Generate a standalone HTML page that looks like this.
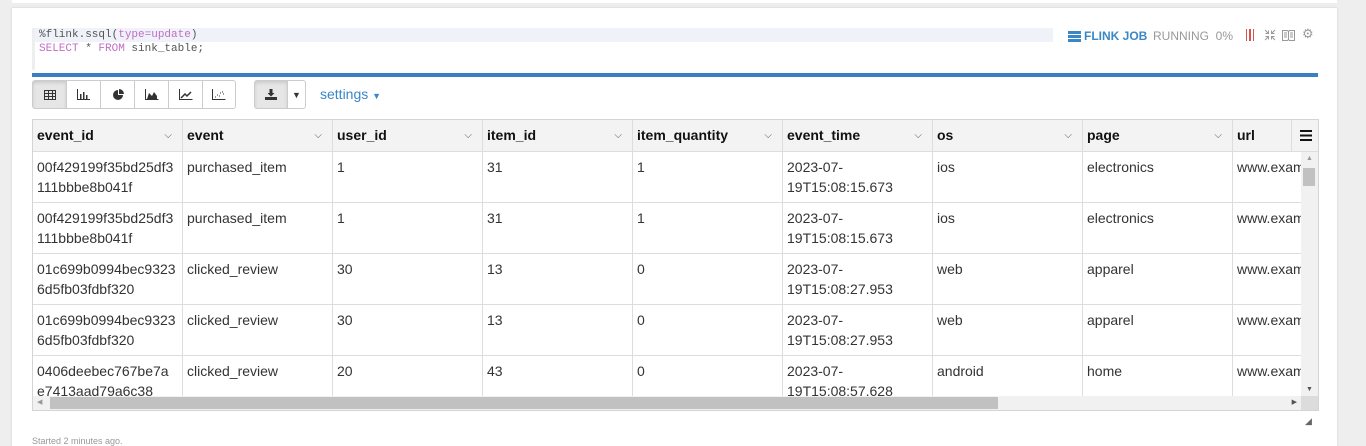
<!DOCTYPE html>
<html style="overflow:hidden;height:446px"><head><meta charset="utf-8"><style>
*{box-sizing:border-box;margin:0;padding:0}
body{width:1366px;height:446px;background:#eeeeee;font-family:"Liberation Sans",sans-serif;position:relative;overflow:hidden}
.abs{position:absolute}
.card{left:12px;top:8px;width:1325px;height:438px;background:#fff;box-shadow:0 0 2px #ccc}
.mono{font-family:"Liberation Mono",monospace;font-size:11px;color:#555}
.kw{color:#c26ec2}
.btn{position:absolute;top:80px;height:29px;border:1px solid #ccc;background:#fff;display:flex;align-items:center;justify-content:center}
table{border-collapse:collapse;table-layout:fixed}
td,th{border:1px solid #ddd;font-size:14px;color:#333;text-align:left;vertical-align:top;padding:5px 4px;line-height:20px;overflow:hidden;white-space:nowrap}
th{background:#f3f3f3;height:32px;font-weight:bold;color:#111;padding:5px 4px;position:relative}
th .c{position:absolute;right:10px;top:6px;font-size:10px;color:#555;font-weight:normal}
td{height:51px;background:#fff}
</style></head><body>
<div class="abs" style="left:12px;top:0;width:1325px;height:3px;background:#fff"></div>
<div class="abs card"></div>
<div class="abs" style="left:32px;top:28px;width:3px;height:42px;background:#eee"></div>
<div class="abs" style="left:35px;top:28px;width:1018px;height:14px;background:#eff2f8"></div>
<div class="abs mono" style="left:39px;top:28px;line-height:14px">%flink.ssql(<span class="kw">type=update</span>)<br><span class="kw">SELECT</span> * <span class="kw">FROM</span> sink_table;</div>
<div class="abs" style="left:1068px;top:29px;font-size:12px;color:#3a87c8;font-weight:bold;display:flex;align-items:center;gap:3px">
<svg width="13" height="11"><rect x="0" y="0" width="13" height="3" fill="#3a87c8"/><rect x="0" y="4" width="13" height="3" fill="#3a87c8"/><rect x="0" y="8" width="13" height="3" fill="#3a87c8"/></svg>FLINK JOB</div>
<div class="abs" style="left:1153px;top:29px;font-size:12px;color:#999">RUNNING&nbsp;&nbsp;0%</div>
<div class="abs" style="left:1246px;top:29px;width:8px;height:12px;border:1px solid #d9534f;border-top:none;border-bottom:none"><div style="margin-left:2px;width:2px;height:12px;border-left:1px solid #d9534f;border-right:1px solid #d9534f"></div></div>
<svg class="abs" style="left:1264px;top:29px" width="12" height="12"><path d="M1 1l3.5 3.5M4.5 1.5v3h-3M11 1L7.5 4.5M7.5 1.5v3h3M1 11l3.5-3.5M1.5 7.5h3v3M11 11L7.5 7.5M7.5 10.5v-3h3" stroke="#999" fill="none"/></svg>
<svg class="abs" style="left:1282px;top:29px" width="13" height="12"><path d="M0.5 1.5h5l1 1 1-1h5v10h-5l-1-1-1 1h-5z M6.5 2.5v8M2 4h3M2 6h3M2 8h3M8 4h3M8 6h3M8 8h3" stroke="#999" fill="none"/></svg>
<div class="abs" style="left:1302px;top:26px;font-size:13px;color:#999">⚙</div>
<div class="abs" style="left:32px;top:73px;width:1286px;height:4px;background:#3a7fc4"></div>
<div class="btn" style="left:32px;width:35px;background:#e6e6e6;border-radius:3px 0 0 3px;box-shadow:inset 0 2px 3px rgba(0,0,0,.12)"><svg width="12" height="10"><path d="M0.5 0.5h11v9h-11zM0.5 3.5h11M0.5 6.5h11M4.5 0.5v9M8.5 0.5v9" stroke="#333" fill="none"/></svg></div>
<div class="btn" style="left:66px;width:35px"><svg width="13" height="11"><path d="M0.5 0v10.5h13" stroke="#333" fill="none"/><path d="M3 5h1.5v5H3zM6 3h1.5v7H6zM9 6h1.5v4H9z" fill="#333"/></svg></div>
<div class="btn" style="left:100px;width:35px"><svg width="12" height="12"><path d="M6 1A5 5 0 1 0 11 6H6z" fill="#333"/><path d="M7 0A5 5 0 0 1 12 5H7z" fill="#333"/></svg></div>
<div class="btn" style="left:134px;width:35px"><svg width="14" height="11"><path d="M0.5 0v10.5h13" stroke="#333" fill="none"/><path d="M2 10L4 4l3 3 2-4 3 4v3z" fill="#333"/></svg></div>
<div class="btn" style="left:168px;width:35px"><svg width="14" height="11"><path d="M0.5 0v10.5h13" stroke="#333" fill="none"/><path d="M2 9l4-4 2 2 4-4" stroke="#333" stroke-width="1.5" fill="none"/></svg></div>
<div class="btn" style="left:202px;width:34px;border-radius:0 3px 3px 0"><svg width="14" height="11"><path d="M0.5 0v10.5h13" stroke="#333" fill="none"/><path d="M3 8h1M5 6h1M7 7h1M8 4h1M10 3h1M11 5h1" stroke="#333"/></svg></div>
<div class="btn" style="left:254px;width:34px;background:#e6e6e6;border-radius:3px 0 0 3px;box-shadow:inset 0 2px 3px rgba(0,0,0,.12)"><svg width="12" height="11"><path d="M4.5 0h3v4h2l-3.5 3.5L2.5 4h2z" fill="#333"/><path d="M0 8h12v3H0z" fill="#333"/></svg></div>
<div class="btn" style="left:287px;width:19px;border-radius:0 3px 3px 0;font-size:9px;color:#333">▼</div>
<div class="abs" style="left:320px;top:86px;font-size:14px;color:#3a87c8">settings <span style="font-size:9px">▼</span></div>
<div class="abs" style="left:32px;top:119px;width:1287px;height:292px;border:1px solid #d4d4d4;overflow:hidden;background:#fff">
<table style="width:1300px;margin:-1px 0 0 -1px">
<colgroup><col style="width:150px"><col style="width:150px"><col style="width:150px"><col style="width:150px"><col style="width:150px"><col style="width:150px"><col style="width:150px"><col style="width:150px"><col style="width:100px"></colgroup>
<tr><th>event_id<span class="c">⌵</span></th><th>event<span class="c">⌵</span></th><th>user_id<span class="c">⌵</span></th><th>item_id<span class="c">⌵</span></th><th>item_quantity<span class="c">⌵</span></th><th>event_time<span class="c">⌵</span></th><th>os<span class="c">⌵</span></th><th>page<span class="c">⌵</span></th><th>url</th></tr>
<tr><td>00f429199f35bd25df3<br>111bbbe8b041f</td><td>purchased_item</td><td>1</td><td>31</td><td>1</td><td>2023-07-<br>19T15:08:15.673</td><td>ios</td><td>electronics</td><td>www.exam</td></tr>
<tr><td>00f429199f35bd25df3<br>111bbbe8b041f</td><td>purchased_item</td><td>1</td><td>31</td><td>1</td><td>2023-07-<br>19T15:08:15.673</td><td>ios</td><td>electronics</td><td>www.exam</td></tr>
<tr><td>01c699b0994bec9323<br>6d5fb03fdbf320</td><td>clicked_review</td><td>30</td><td>13</td><td>0</td><td>2023-07-<br>19T15:08:27.953</td><td>web</td><td>apparel</td><td>www.exam</td></tr>
<tr><td>01c699b0994bec9323<br>6d5fb03fdbf320</td><td>clicked_review</td><td>30</td><td>13</td><td>0</td><td>2023-07-<br>19T15:08:27.953</td><td>web</td><td>apparel</td><td>www.exam</td></tr>
<tr><td>0406deebec767be7a<br>e7413aad79a6c38</td><td>clicked_review</td><td>20</td><td>43</td><td>0</td><td>2023-07-<br>19T15:08:57.628</td><td>android</td><td>home</td><td>www.exam</td></tr>
</table>
<div class="abs" style="left:1258px;top:0;width:28px;height:32px;background:#f3f3f3;border-left:1px solid #ddd;border-bottom:1px solid #ddd;display:flex;align-items:center;justify-content:center"><svg width="12" height="11"><path d="M0 1h12M0 5.5h12M0 10h12" stroke="#111" stroke-width="2"/></svg></div>
<div class="abs" style="left:1268px;top:32px;width:17px;height:244px;background:#f1f1f1"><div style="font-size:7px;color:#999;text-align:center;margin-top:3px">▲</div><div style="position:absolute;left:2px;top:16px;width:12px;height:18px;background:#c1c1c1"></div><div style="position:absolute;bottom:3px;width:17px;font-size:7px;color:#555;text-align:center">▼</div></div>
<div class="abs" style="left:0;top:276px;width:1268px;height:14px;background:#f1f1f1"><div style="position:absolute;left:4px;top:2px;font-size:7px;color:#999">◀</div><div style="position:absolute;left:17px;top:1px;width:948px;height:12px;background:#c1c1c1"></div><div style="position:absolute;right:4px;top:2px;font-size:7px;color:#555">▶</div></div>
<div class="abs" style="left:1268px;top:276px;width:17px;height:14px;background:#dcdcdc"></div>
</div>
<div class="abs" style="left:1305px;top:416px;font-size:9px;color:#666">◢</div>
<div class="abs" style="left:32px;top:436px;font-size:9px;color:#999">Started 2 minutes ago.</div>
</body></html>
